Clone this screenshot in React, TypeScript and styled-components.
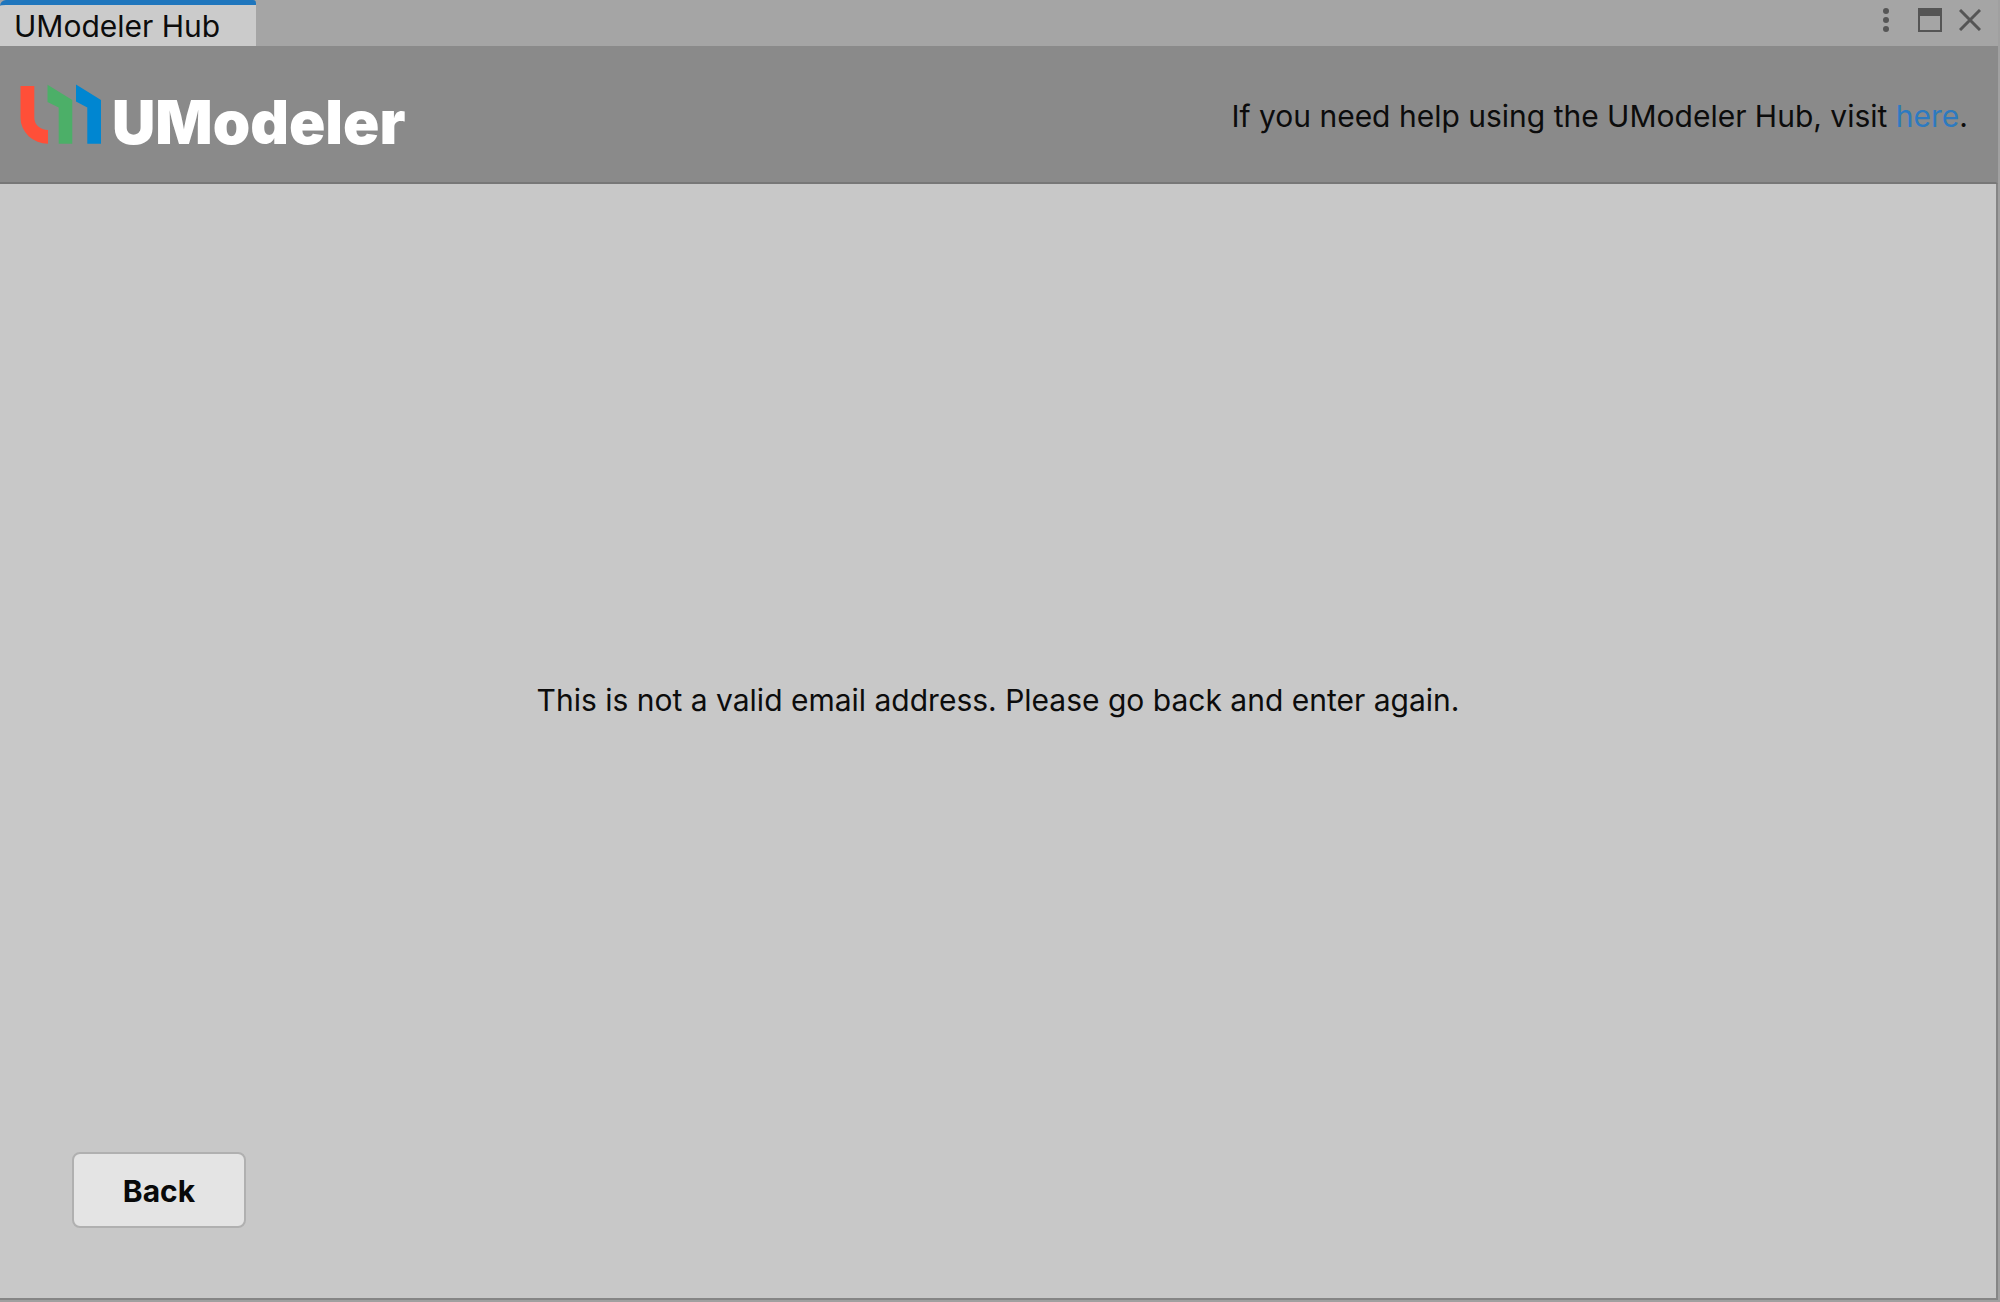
import React from "react";
import styled, { createGlobalStyle } from "styled-components";

const GlobalStyle = createGlobalStyle`
  *, *::before, *::after { box-sizing: border-box; }
  body {
    margin: 0;
    background: #a6a6a6;
    color: #0c0c0c;
    font-family: Inter, "Liberation Sans", sans-serif;
    font-size: 30px;
    line-height: 36px;
  }
`;

const Window = styled.div`
  display: flex;
  flex-direction: column;
  min-height: 100vh;
  border-right: 2px solid #a0a0a0;
  border-bottom: 2px solid #a0a0a0;
`;

const TabBar = styled.div`
  display: flex;
  justify-content: space-between;
  height: 46px;
  background: #a5a5a5;
`;

const Tab = styled.button`
  padding: 0 36px 0 14px;
  border: 0;
  border-top: 5px solid #1f76bd;
  border-radius: 6px 3px 0 0;
  background: #cbcbcb;
  color: inherit;
  font: inherit;
`;

const WindowControls = styled.div`
  display: flex;
  align-items: flex-start;
  gap: 8px;
  padding: 4px 12px 0 0;
`;

const ControlButton = styled.button<{ $wide?: boolean }>`
  display: grid;
  place-items: center;
  width: ${({ $wide }) => ($wide ? 40 : 32)}px;
  height: 32px;
  padding: 0;
  border: 0;
  background: none;
  color: #555;
`;

const Header = styled.header`
  display: flex;
  align-items: center;
  justify-content: space-between;
  height: 138px;
  padding: 4px 28px 0 20px;
  border-bottom: 2px solid #777;
  border-right: 2px solid #8a8a8a;
  background: #8a8a8a;
`;

const Brand = styled.div`
  display: flex;
  align-items: baseline;
  gap: 10px;
`;

const Wordmark = styled.span`
  color: #fff;
  font-size: 60px;
  font-weight: 900;
  line-height: 54px;
`;

const HelpText = styled.p`
  margin: 0;
`;

const HelpLink = styled.a`
  color: #2d7ac0;
  text-decoration: none;
`;

const Content = styled.main`
  display: flex;
  flex: 1;
  flex-direction: column;
  border-right: 2px solid #858585;
  border-bottom: 2px solid #858585;
  background: #c8c8c8;
`;

const Message = styled.p`
  display: grid;
  flex: 1;
  place-items: center;
  margin: 0;
  padding-top: 64px;
`;

const Footer = styled.footer`
  padding: 0 72px 70px;
`;

const BackButton = styled.button`
  width: 174px;
  height: 76px;
  padding: 2px 0 0;
  border: 2px solid #b0b0b0;
  border-radius: 8px;
  background: #e4e4e4;
  color: #090909;
  font: inherit;
  font-weight: 700;
`;

const BrandMark = () => (
  <svg width="82" height="60" viewBox="0 0 82 60" aria-hidden="true">
    <path fill="#ff4f38" d="M0.5 2H14.3V34A13.5 12 0 0 0 28 46V59.7A27.5 26 0 0 1 0.5 34Z" />
    <path fill="#4caf68" d="M27.5 0.7L52.3 16V59.7H38.7V23.5L27.5 18Z" />
    <path fill="#0086d1" d="M56 0.5L81 16V59.7H67.3V23.5L56 17.5Z" />
  </svg>
);

const MenuIcon = () => (
  <svg width="8" height="26" viewBox="0 0 8 26" fill="currentColor" aria-hidden="true">
    <circle cx="4" cy="4" r="3" />
    <circle cx="4" cy="13" r="3" />
    <circle cx="4" cy="22" r="3" />
  </svg>
);

const MaximizeIcon = () => (
  <svg width="24" height="24" viewBox="0 0 24 24" aria-hidden="true">
    <path d="M1 1H23V23H1Z" fill="none" stroke="currentColor" strokeWidth="2" />
    <path d="M0 0H24V8H0Z" fill="currentColor" />
  </svg>
);

const CloseIcon = () => (
  <svg width="22" height="22" viewBox="0 0 22 22" aria-hidden="true">
    <path d="M1 1L21 21M21 1L1 21" stroke="currentColor" strokeWidth="3" />
  </svg>
);

export default function App() {
  return (
    <>
      <GlobalStyle />
      <Window>
        <TabBar>
          <Tab type="button">UModeler Hub</Tab>
          <WindowControls>
            <ControlButton type="button" aria-label="Menu" $wide><MenuIcon /></ControlButton>
            <ControlButton type="button" aria-label="Maximize"><MaximizeIcon /></ControlButton>
            <ControlButton type="button" aria-label="Close"><CloseIcon /></ControlButton>
          </WindowControls>
        </TabBar>
        <Header>
          <Brand>
            <BrandMark />
            <Wordmark>UModeler</Wordmark>
          </Brand>
          <HelpText>
            If you need help using the UModeler Hub, visit <HelpLink href="#help">here</HelpLink>.
          </HelpText>
        </Header>
        <Content>
          <Message>This is not a valid email address. Please go back and enter again.</Message>
          <Footer>
            <BackButton type="button">Back</BackButton>
          </Footer>
        </Content>
      </Window>
    </>
  );
}
